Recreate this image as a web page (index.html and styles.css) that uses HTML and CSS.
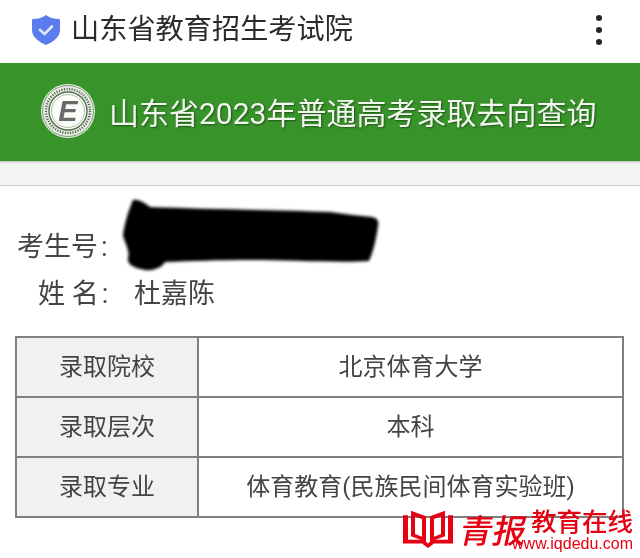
FILE: index.html
```html
<!DOCTYPE html>
<html lang="zh-CN">
<head>
    <meta charset="UTF-8">
    <meta name="viewport" content="width=device-width, initial-scale=1.0">
    <title>山东省教育招生考试院</title>
    <link rel="stylesheet" href="styles.css">
</head>
<body>
    <header class="topbar">
        <svg class="shield" viewBox="0 0 28 30" width="28" height="30">
            <path d="M14 0 C18 3 23 4 27 4 C28 4 28 5 28 6 L28 15 C28 22 21 27 14 30 C7 27 0 22 0 15 L0 6 C0 5 0 4 1 4 C5 4 10 3 14 0 Z" fill="#5b7cee"/>
            <path d="M8 15 L12.5 19 L20 11.5" fill="none" stroke="#dfe6fb" stroke-width="2.6" stroke-linecap="round" stroke-linejoin="round"/>
        </svg>
        <span class="topbar-title">山东省教育招生考试院</span>
        <div class="menu-dots"><i></i><i></i><i></i></div>
    </header>

    <section class="banner">
        <svg class="seal" viewBox="0 0 54 54" width="54" height="54">
            <circle cx="27" cy="27" r="27" fill="#e9efe6"/>
            <circle cx="27" cy="27" r="25.5" fill="none" stroke="#7f9a78" stroke-width="1"/>
            <circle cx="27" cy="27" r="22" fill="none" stroke="#4f6b4a" stroke-width="2.4" stroke-dasharray="1.2 1.4"/>
            <circle cx="27" cy="27" r="19" fill="#fbfdf9" stroke="#4f6b4a" stroke-width="1.4"/>
            <circle cx="27" cy="27" r="16.5" fill="none" stroke="#9db096" stroke-width="0.8"/>
            <text class="seal-letter" x="27" y="37" text-anchor="middle">E</text>
        </svg>
        <h1 class="banner-title">山东省2023年普通高考录取去向查询</h1>
    </section>
    <div class="band"></div>

    <main class="content">
        <div class="info-row info-id">
            <span>考生号<span class="colon">:</span></span>
        </div>
        <div class="info-row info-name">
            <span class="info-label">姓 名<span class="colon">:</span></span>
            <span>杜嘉陈</span>
        </div>

        <table class="result">
            <tr><th>录取院校</th><td>北京体育大学</td></tr>
            <tr><th>录取层次</th><td>本科</td></tr>
            <tr><th>录取专业</th><td>体育教育(民族民间体育实验班)</td></tr>
        </table>
    </main>

    <!-- scribble over the candidate number -->
    <svg class="redact" viewBox="118 194 270 90" width="270" height="90">
        <defs>
            <filter id="soft"><feGaussianBlur stdDeviation="1.5"/></filter>
        </defs>
        <path filter="url(#soft)" d="M133 200 C138 199 145 203 150 207 C200 209 280 210 330 212 C345 214 360 216 372 217 C378 218 379 222 378 226 C376 240 373 252 369 261 C340 263 290 260 250 260 C220 260 190 261 165 262 C162 268 152 271 145 270 C135 268 127 265 128 258 C130 252 126 245 123 236 C124 225 128 212 133 200 Z" fill="#000"/>
    </svg>

    <!-- site watermark -->
    <div class="watermark">
        <svg class="wm-book" viewBox="0 0 52 44" width="52" height="40" preserveAspectRatio="none">
            <path d="M1 8 H6 V35 H22 L26 39 L30 35 H46 V8 H51 V39 H32 L26 44 L20 39 H1 Z" fill="#e60012"/>
            <path d="M9 3 L24 9 V37 L9 31 Z M13 9 V28.500 L20 31.500 V12 Z" fill="#e60012" fill-rule="evenodd"/>
            <path d="M43 3 L28 9 V37 L43 31 Z M39 9 V28.500 L32 31.500 V12 Z" fill="#e60012" fill-rule="evenodd"/>
        </svg>
        <span class="wm-brush">青报</span>
        <div class="wm-text">
            <span class="wm-name">教育在线</span>
            <span class="wm-url">www.iqdedu.com</span>
        </div>
    </div>
</body>
</html>
```

FILE: styles.css
```css
body {
    margin: 0;
    width: 640px;
    height: 558px;
    overflow: hidden;
    position: relative;
    background-color: #fff;
    color: #333;
    font-family: Roboto, "Noto Sans CJK SC", sans-serif;
    filter: blur(0.4px);
}
.topbar {
    height: 63px;
    display: flex;
    align-items: center;
    padding: 0 38px 4px 32px;
    box-sizing: border-box;
}
.shield {
    margin-right: 11px;
}
.topbar-title {
    flex: 1;
    font-size: 28.2px;
    line-height: 30px;
    color: #2b2b2b;
}
.menu-dots {
    display: flex;
    flex-direction: column;
    gap: 6px;
}
.menu-dots i {
    display: block;
    width: 6px;
    height: 6px;
    border-radius: 50%;
    background-color: #222;
}
.banner {
    height: 98px;
    display: flex;
    align-items: center;
    padding-left: 41px;
    background-color: #38942a;
    box-shadow: 0 1px 2px rgba(0, 0, 0, 0.25);
    position: relative;
}
.seal {
    margin: 0 14px 2px 0;
}
.seal-letter {
    font-family: "Liberation Sans", sans-serif;
    font-size: 29px;
    font-weight: bold;
    font-style: italic;
    fill: #6a6a6a;
}
.banner-title {
    margin: 0 0 3px;
    font-size: 30px;
    font-weight: normal;
    color: #f3f7f0;
    text-shadow: 1px 1px 2px rgba(0, 0, 0, 0.45);
}
.band {
    height: 24px;
    background-color: #f4f4f4;
    border-bottom: 1px solid #cfcfcf;
}
.content {
    padding: 0 16px;
}
.info-row {
    font-size: 27px;
    color: #444;
    display: flex;
    line-height: 38px;
}
.info-id {
    padding: 42px 0 0 1px;
}
.info-name {
    padding: 9px 0 0 22px;
}
.info-label {
    width: 96px;
}
.colon {
    margin-left: 3px;
}
.result {
    width: 609px;
    margin: 23px 0 0 -1px;
    border-collapse: collapse;
    border: 2px solid #808080;
    table-layout: fixed;
    font-size: 24px;
    color: #444;
}
.result th,
.result td {
    height: 53px;
    padding: 0 0 5px;
    text-align: center;
    font-weight: normal;
    border: 2px solid #808080;
}
.result th {
    width: 180px;
    background-color: #f1f1f1;
}
.redact {
    position: absolute;
    left: 118px;
    top: 194px;
}
.watermark {
    position: absolute;
    left: 402px;
    top: 505px;
    width: 231px;
    display: flex;
    align-items: flex-start;
    color: #e60012;
}
.wm-book {
    flex: none;
    margin-top: 3px;
}
.wm-brush {
    flex: none;
    font-family: "Noto Sans CJK SC", sans-serif;
    font-size: 33px;
    font-weight: 500;
    line-height: 30px;
    margin: 9px 0 0 7px;
    white-space: nowrap;
    transform: skewX(-12deg);
}
.wm-text {
    flex: none;
    width: 102px;
    display: flex;
    flex-direction: column;
    align-items: flex-end;
    margin-left: auto;
}
.wm-name {
    font-family: "Noto Sans CJK SC", sans-serif;
    font-size: 25.5px;
    font-weight: 500;
    line-height: 30px;
}
.wm-url {
    font-family: "Liberation Sans", sans-serif;
    font-size: 16px;
    line-height: 17px;
    white-space: nowrap;
}
```
